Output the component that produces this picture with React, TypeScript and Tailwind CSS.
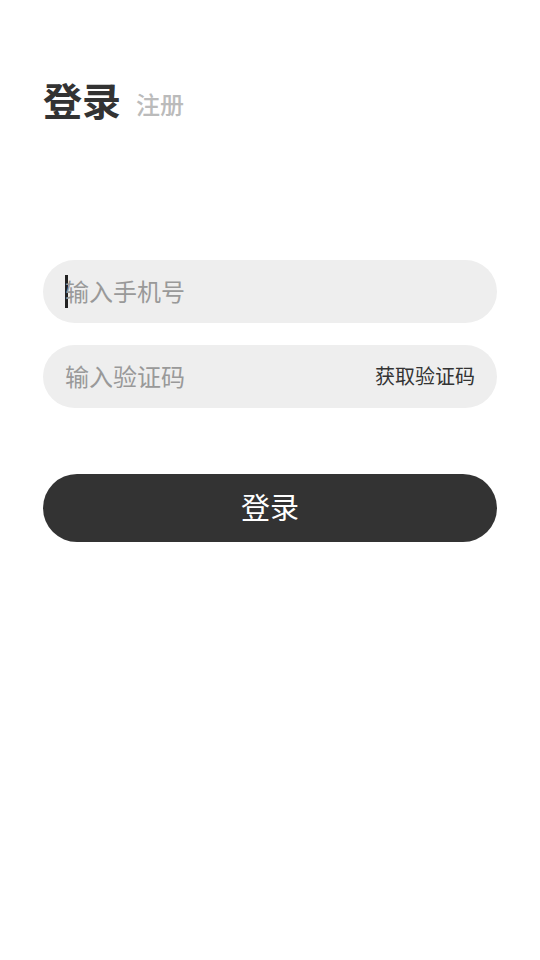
export default function App() {
  return (
    <div
      className="min-h-[960px] bg-white px-[43px] pt-[73px]"
      style={{ fontFamily: '"Noto Sans CJK SC", "Noto Sans", sans-serif' }}
    >
      <div className="flex items-baseline">
        <span className="text-[39px] font-bold leading-[52px] text-[#333]">登录</span>
        <span className="relative -top-[2px] ml-[15px] text-[24px] font-medium text-[#bbb]">注册</span>
      </div>

      <div className="mt-[135px] flex flex-col gap-[22px]">
        <div className="flex h-[63px] items-center rounded-full bg-[#eee] pb-[2px] pl-[22px] pr-[23px]">
          <span className="mt-[2px] h-[33px] w-[3px] bg-[#222]" />
          <span className="-ml-[3px] text-[24px] text-[#999]">输入手机号</span>
        </div>
        <div className="flex h-[63px] items-center justify-between rounded-full bg-[#eee] pb-[2px] pl-[22px] pr-[22px]">
          <span className="text-[24px] text-[#999]">输入验证码</span>
          <span className="text-[20px] text-[#333]">获取验证码</span>
        </div>
      </div>

      <button className="mt-[66px] flex h-[68px] w-full items-center justify-center rounded-full bg-[#333] pb-[2px] text-[29px] text-white">
        登录
      </button>
    </div>
  );
}
